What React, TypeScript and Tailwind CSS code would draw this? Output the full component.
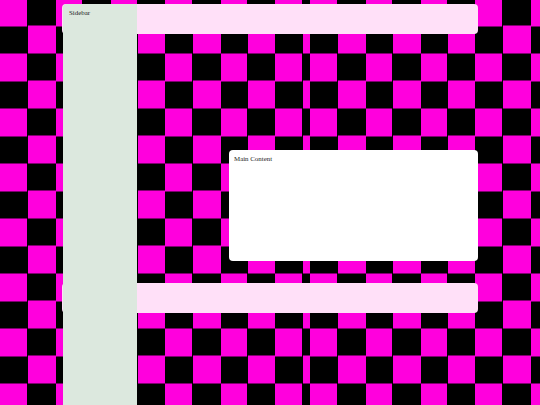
const checker =
  '[background-image:conic-gradient(#000_0_25%,#ff00dd_0_50%,#000_0_75%,#ff00dd_0)] [background-size:55px_55px] [background-position:0_-1.5px]'

export default function App() {
  return (
    <div
      className="grid min-h-screen w-full grid-cols-[310px_1fr] overflow-hidden"
      style={{ fontFamily: '"Liberation Serif", "Times New Roman", serif' }}
    >
      {/* backdrop: the pattern restarts at x=310 */}
      <div className={`col-start-1 row-start-1 ${checker}`} />
      <div className={`col-start-2 row-start-1 ${checker}`} />

      <div className="relative col-span-2 col-start-1 row-start-1 pt-1">
        <div className="ml-[62px] grid w-[416px] grid-cols-[75px_92px_249px] grid-rows-[30px_116px_111px_22px_30px_100px]">
          <div className="relative z-10 col-start-1 row-span-6 row-start-1 ml-px rounded-tl-[4px] bg-[#dce8de] px-[6px] pt-[5px] text-[6.9px] leading-[1.15] text-[#222]">
            Sidebar
          </div>
          <div className="col-span-3 col-start-1 row-start-1 rounded-[4px] bg-[#ffe0f8]" />
          <div className="col-start-3 row-start-3 rounded-[4px] bg-white px-[5px] pt-[5px] text-[6.9px] leading-[1.15] text-[#222]">
            Main Content
          </div>
          <div className="col-span-3 col-start-1 row-start-5 rounded-[4px] bg-[#ffe0f8]" />
        </div>
      </div>
    </div>
  )
}
